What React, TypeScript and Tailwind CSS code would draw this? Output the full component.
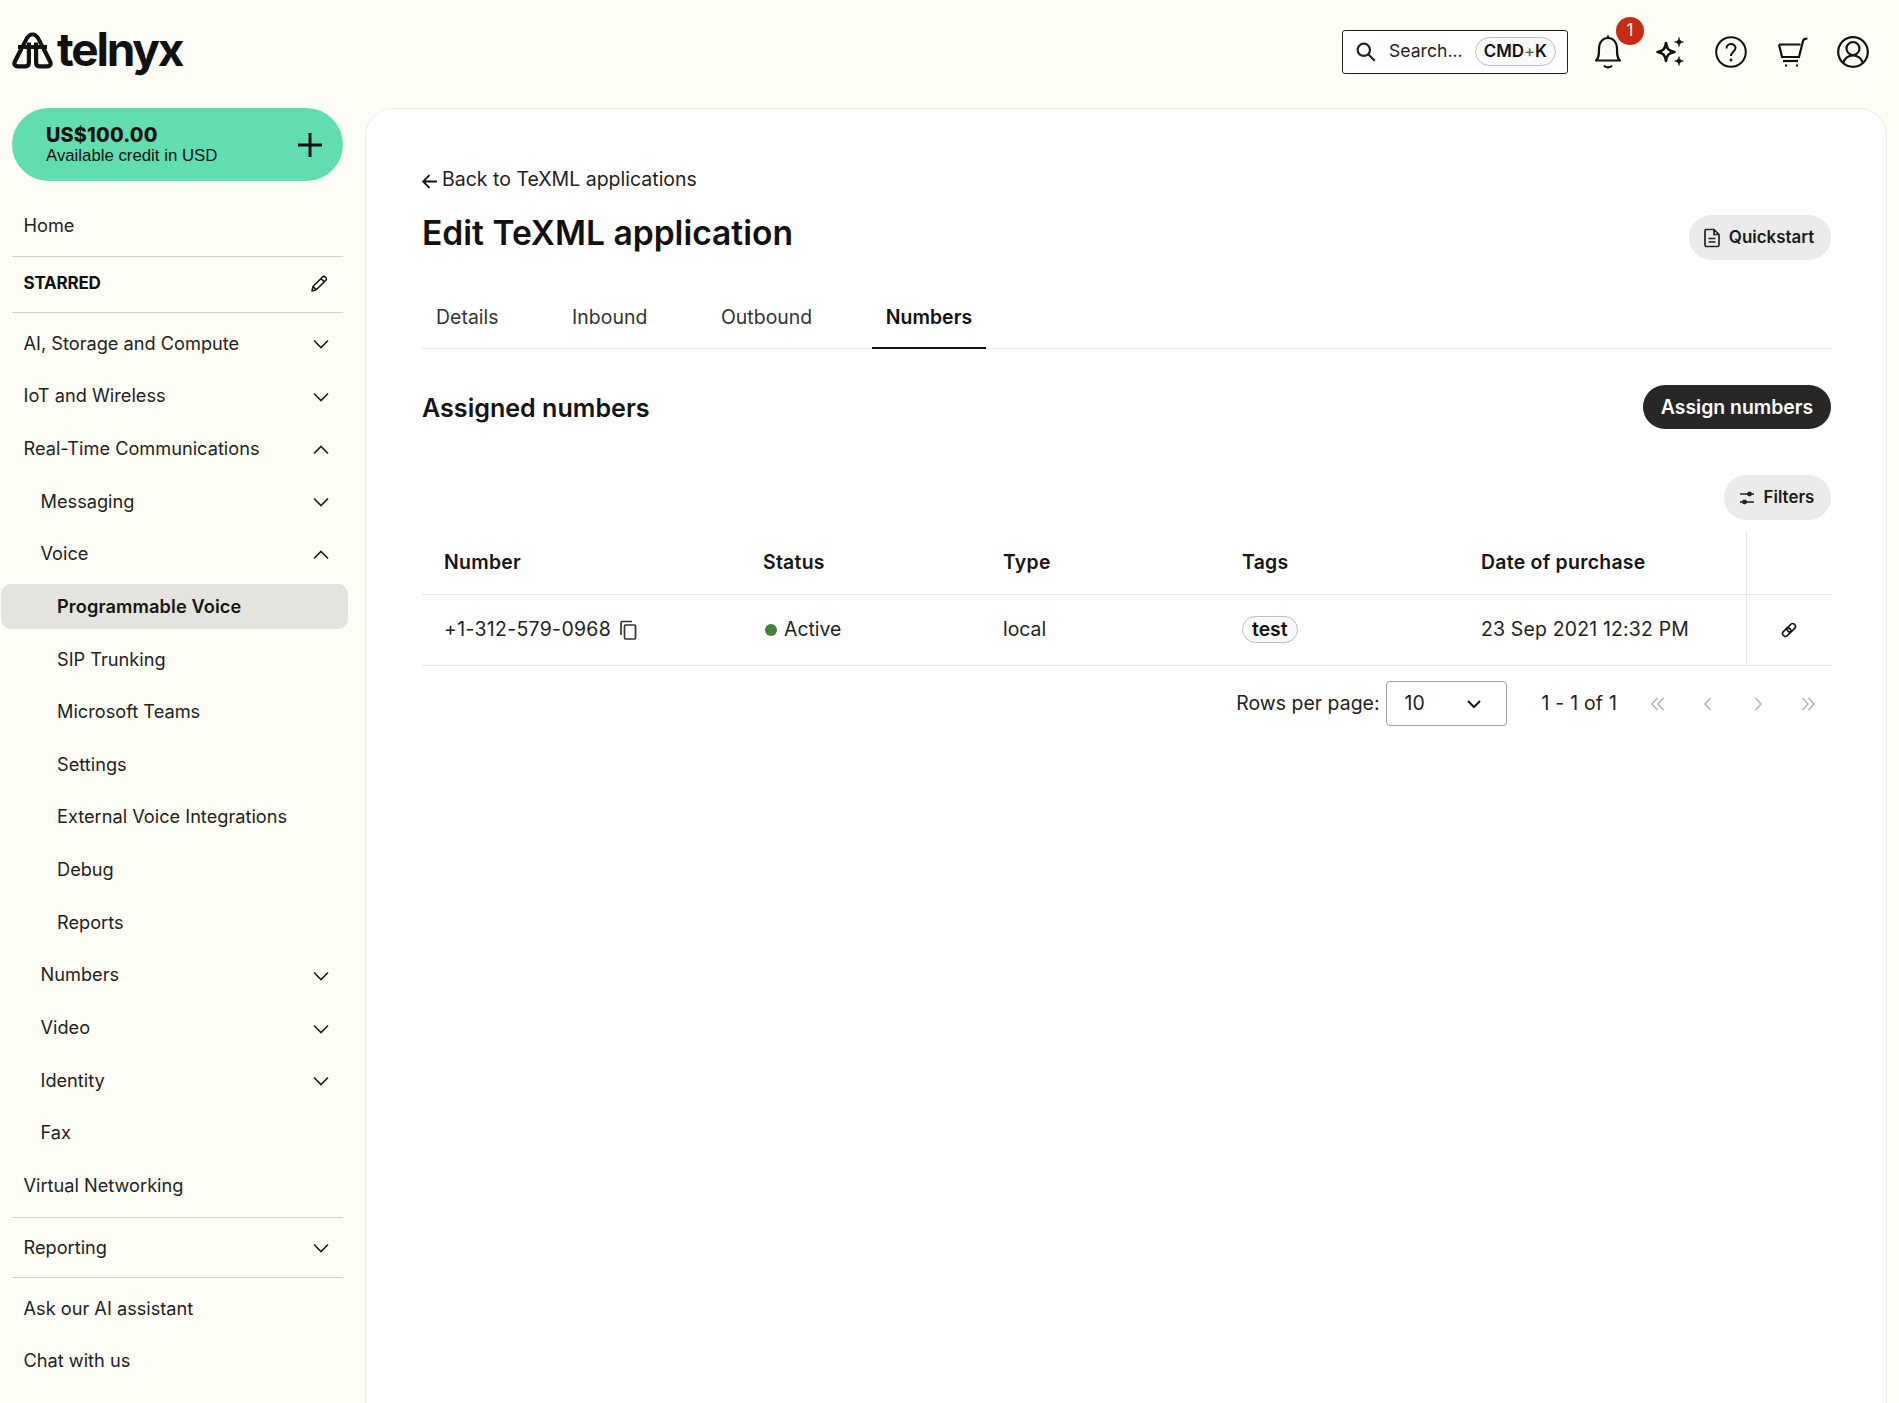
import React from "react";

function Chevron({ up = false }: { up?: boolean }) {
  return (
    <svg width="18" height="12" viewBox="0 0 18 12" fill="none" stroke="#1c1c1c" strokeWidth="1.6" className="shrink-0 mt-[2px]">
      {up ? <path d="M2 9.5 L9 2.5 L16 9.5" /> : <path d="M2 2.5 L9 9.5 L16 2.5" />}
    </svg>
  );
}

function NavRow({ label, level = 0, chevron, active = false }: { label: string; level?: 0 | 1 | 2; chevron?: "up" | "down"; active?: boolean }) {
  const indent = level === 0 ? "pl-[11.5px]" : level === 1 ? "pl-[28.5px]" : "pl-[45px]";
  if (active) {
    return (
      <div className="h-[52.65px] flex items-center -ml-[11px]">
        <div className="w-[347px] h-[45px] shrink-0 rounded-[10px] bg-[#e4e3de] flex items-center pl-[56px] font-semibold text-[18.2px] tracking-[0.1px] text-[#151515]">{label}</div>
      </div>
    );
  }
  return (
    <div className={`h-[52.65px] flex items-center justify-between pr-[13px] text-[18.2px] text-[#222222] ${indent}`}>
      <span>{label}</span>
      {chevron ? <Chevron up={chevron === "up"} /> : null}
    </div>
  );
}

function Logo() {
  return (
    <div className="flex items-center gap-[4px] -mt-[5px]">
      <svg width="41" height="37" viewBox="0 0 41 36" fill="none" stroke="#111111" className="shrink-0 -mt-[2px]">
        <path d="M10 15 L15 5.5 C16.6 2.6 18.6 1.8 20.5 1.8 C22.4 1.8 24.4 2.6 26 5.5 L31 15" strokeWidth="3.8" />
        <path d="M6 14.5 H35" strokeWidth="4" />
        <path d="M9.5 16 L2.9 29 C1.5 32 3 33.8 6 33.8 H13.5 C15.6 33.8 16.9 32.6 16.9 30 V10" strokeWidth="4.2" />
        <path d="M31.5 16 L38.1 29 C39.5 32 38 33.8 35 33.8 H27.5 C25.4 33.8 24.1 32.6 24.1 30 V10" strokeWidth="4.2" />
      </svg>
      <span className="text-[46px] leading-none font-bold tracking-[-2.2px] text-[#111111] -mt-[5px]">telnyx</span>
    </div>
  );
}

function IconButtons() {
  return (
    <div className="flex items-center">
      <div className="relative w-[30px] h-[36px] ml-[25px]">
        <svg width="30" height="36" viewBox="0 0 30 36" fill="none" stroke="#111111" strokeWidth="2.2">
          <path d="M15 1.5 V4" />
          <path d="M3 26.5 C6 24 6 20 6 15 C6 8 10 4 15 4 C20 4 24 8 24 15 C24 20 24 24 27 26.5 Z" strokeLinejoin="round" />
          <path d="M11 31.5 C12.5 34 17.5 34 19 31.5" />
        </svg>
        <span className="absolute -top-[17px] left-[23px] w-[28px] h-[28px] rounded-full bg-[#c62c15] text-white text-[17px] flex items-center justify-center">1</span>
      </div>
      <svg width="32" height="32" viewBox="0 0 32 32" className="ml-[30px]">
        <path d="M13 7 C14 13 15.5 15 21.5 16 C15.5 17 14 19 13 25 C12 19 10.5 17 4.5 16 C10.5 15 12 13 13 7 Z" fill="none" stroke="#111111" strokeWidth="2.6" strokeLinejoin="round" />
        <path d="M26 1.5 C26.6 4.5 27.5 5.4 30.5 6 C27.5 6.6 26.6 7.5 26 10.5 C25.4 7.5 24.5 6.6 21.5 6 C24.5 5.4 25.4 4.5 26 1.5 Z" fill="#111111" stroke="#111111" strokeWidth="0.6" />
        <path d="M26 20.5 C26.6 23.5 27.5 24.4 30.5 25 C27.5 25.6 26.6 26.5 26 29.5 C25.4 26.5 24.5 25.6 21.5 25 C24.5 24.4 25.4 23.5 26 20.5 Z" fill="#111111" stroke="#111111" strokeWidth="0.6" />
      </svg>
      <svg width="32" height="34" viewBox="0 0 32 34" fill="none" stroke="#111111" strokeWidth="2" className="ml-[30px]">
        <circle cx="16" cy="17" r="14.8" />
        <path d="M11.5 13.5 C11.5 7.5 20.5 7.5 20.5 13 C20.5 16.5 16 17 16 21" />
        <circle cx="16" cy="25" r="1.4" fill="#111111" stroke="none" />
      </svg>
      <svg width="32" height="30" viewBox="0 0 32 30" fill="none" stroke="#111111" strokeWidth="2.2" className="ml-[30px]">
        <path d="M2 7.5 H23.5 M2 7.5 L5 20 H22 L26 4 C26.5 2 27.5 1.5 30.5 1.5" />
        <path d="M6 24 H21" />
        <path d="M8 28.5 H10 M19 28.5 H21" />
      </svg>
      <svg width="32" height="34" viewBox="0 0 32 34" fill="none" stroke="#111111" strokeWidth="2.2" className="ml-[28px]">
        <circle cx="16" cy="17" r="14.8" />
        <circle cx="16" cy="13.5" r="6.5" />
        <path d="M6 28 C8 22.5 12 20.5 16 20.5 C20 20.5 24 22.5 26 28" />
      </svg>
    </div>
  );
}

function Header() {
  return (
    <header className="h-[108px] flex items-center justify-between pl-3 pr-[30px]">
      <Logo />
      <div className="flex items-center -mt-[5px]">
        <div className="w-[226px] h-[44px] border border-[#222222] rounded-[3px] bg-white flex items-center pl-[12px] pr-[11px] text-[17.6px] text-[#222222]">
          <svg width="22" height="22" viewBox="0 0 20 20" fill="none" stroke="#222222" strokeWidth="2" className="shrink-0">
            <circle cx="8" cy="8" r="5.6" />
            <path d="M12 12 L18 18" />
          </svg>
          <span className="ml-[12px]">Search...</span>
          <span className="ml-auto rounded-full border border-[#bdbdbd] bg-[#fafafa] h-[29px] px-[8px] flex items-center text-[16.9px] font-semibold text-[#111111]">CMD<span className="font-normal text-[#555555]">+</span>K</span>
        </div>
        <IconButtons />
      </div>
    </header>
  );
}

function Sidebar() {
  return (
    <aside className="w-[353px] ml-3 shrink-0">
      <div className="w-[331px]">
        <div className="h-[73px] rounded-full bg-[#60deb0] flex items-center justify-between pl-[34px] pr-[20px] text-[#111111]">
          <div className="flex flex-col">
            <span className="text-[19.8px] leading-[22px] font-extrabold tracking-[0.2px]">US$100.00</span>
            <span className="text-[16.8px] leading-[19px] [font-family:'Liberation_Sans',sans-serif]">Available credit in USD</span>
          </div>
          <svg width="26" height="26" viewBox="0 0 26 26" stroke="#111111" strokeWidth="3">
            <path d="M13 1 V25 M1 13 H25" />
          </svg>
        </div>
        <div className="mt-[18px] border-b border-[#d2d2d2] pb-[4px]">
          <NavRow label="Home" />
        </div>
        <div className="h-[56px] border-b border-[#d2d2d2] flex items-center justify-between pl-[11.5px] pr-[15px] mb-[4.4px]">
          <span className="text-[17px] font-bold text-[#111111] tracking-[-0.2px]">STARRED</span>
          <svg width="18" height="18" viewBox="0 0 18 18" fill="none" stroke="#111111" strokeWidth="1.5">
            <path d="M2 16 L3 11.5 L12.5 2 C13.3 1.2 14.5 1.2 15.5 2.2 C16.6 3.3 16.6 4.4 15.8 5.3 L6.3 14.8 Z M11 3.6 L14.2 6.8 M3 11.5 L6.3 14.8" strokeLinejoin="round" />
          </svg>
        </div>
        <NavRow label="AI, Storage and Compute" chevron="down" />
        <NavRow label="IoT and Wireless" chevron="down" />
        <NavRow label="Real-Time Communications" chevron="up" />
        <NavRow label="Messaging" level={1} chevron="down" />
        <NavRow label="Voice" level={1} chevron="up" />
        <NavRow label="Programmable Voice" level={2} active />
        <NavRow label="SIP Trunking" level={2} />
        <NavRow label="Microsoft Teams" level={2} />
        <NavRow label="Settings" level={2} />
        <NavRow label="External Voice Integrations" level={2} />
        <NavRow label="Debug" level={2} />
        <NavRow label="Reports" level={2} />
        <NavRow label="Numbers" level={1} chevron="down" />
        <NavRow label="Video" level={1} chevron="down" />
        <NavRow label="Identity" level={1} chevron="down" />
        <NavRow label="Fax" level={1} />
        <NavRow label="Virtual Networking" />
        <div className="mt-[5px] border-y border-[#d2d2d2] h-[61px] flex flex-col justify-center">
          <NavRow label="Reporting" chevron="down" />
        </div>
        <div className="mt-[4px]">
          <NavRow label="Ask our AI assistant" />
          <NavRow label="Chat with us" />
        </div>
      </div>
    </aside>
  );
}

function PillButton({ icon, label, className }: { icon: React.ReactNode; label: string; className: string }) {
  return (
    <div className={`rounded-full bg-[#ebebeb] flex items-center justify-center gap-[8px] pr-[3px] font-semibold text-[#1a1a1a] text-[16.9px] ${className}`}>
      {icon}
      <span>{label}</span>
    </div>
  );
}

function Tab({ label, active = false }: { label: string; active?: boolean }) {
  return (
    <div className={`h-[66px] px-[14px] flex items-center text-[19.4px] tracking-[0.05px] ${active ? "pt-[5px] font-semibold text-[#111111] border-b-2 border-[#111111]" : "pt-[3px] text-[#333333]"}`}>
      {label}
    </div>
  );
}

function PagerIcon({ d }: { d: string }) {
  return (
    <svg width="20" height="20" viewBox="0 0 20 20" fill="none" stroke="#b5b5b5" strokeWidth="1.6" className="shrink-0">
      <path d={d} />
    </svg>
  );
}

function Content() {
  const gridCols = "grid grid-cols-[319px_240px_239px_239px_287px_85px]";
  return (
    <main className="flex-1 mr-3 bg-white border border-[#ececec] rounded-t-[28px] border-b-0 pl-[56px] pr-[55px] min-h-0">
      <div className="mt-[58px] flex items-center h-[26px] text-[19.5px] text-[#222222]">
        <svg width="17" height="17" viewBox="0 0 16 16" fill="none" stroke="#111111" strokeWidth="1.7" className="shrink-0 mt-[2px] mr-[4px] -ml-[1px]">
          <path d="M15 8 H2 M8 2 L2 8 L8 14" />
        </svg>
        <span>Back to TeXML applications</span>
      </div>
      <div className="flex items-start justify-between mt-[15px] h-[75px]">
        <h1 className="text-[33.6px] leading-[50px] font-semibold text-[#111111]">Edit TeXML application</h1>
        <PillButton
          label="Quickstart"
          className="w-[142px] h-[45px] mt-[7px]"
          icon={
            <svg width="18" height="20" viewBox="0 0 18 20" fill="none" stroke="#222222" strokeWidth="1.7">
              <path d="M3 1.5 H11 L16 6.5 V17 C16 18 15.3 18.5 14.5 18.5 H3.5 C2.7 18.5 2 18 2 17 V3 C2 2 2.5 1.5 3 1.5 Z M5.5 10.5 H12.5 M5.5 14 H12.5 M11 1.5 V6.5 H16" />
            </svg>
          }
        />
      </div>
      <div className="flex gap-[45.5px] border-b border-[#e8e8e8] h-[66px]">
        <Tab label="Details" />
        <Tab label="Inbound" />
        <Tab label="Outbound" />
        <Tab label="Numbers" active />
      </div>
      <div className="flex items-center justify-between mt-[36px]">
        <h2 className="text-[25.1px] font-semibold text-[#141414] pt-[3px]">Assigned numbers</h2>
        <div className="w-[188px] h-[44px] pt-[1px] rounded-full bg-[#272727] text-white text-[19.4px] font-semibold flex items-center justify-center">Assign numbers</div>
      </div>
      <div className="flex justify-end mt-[46px]">
        <PillButton
          label="Filters"
          className="w-[107px] h-[45px]"
          icon={
            <svg width="18" height="18" viewBox="0 0 18 18" fill="#222222" stroke="#222222" strokeWidth="1.7">
              <path d="M2 5 H16 M2 13 H16" />
              <circle cx="11.5" cy="5" r="1.6" />
              <circle cx="6.5" cy="13" r="1.6" />
            </svg>
          }
        />
      </div>
      <div className={`${gridCols} mt-[11px] h-[64px] items-center border-b border-[#e8e8e8] text-[19.4px] tracking-[0.28px] font-semibold text-[#151515]`}>
        <div className="pl-[22px] pt-[1px]">Number</div>
        <div className="pl-[22px] pt-[1px]">Status</div>
        <div className="pl-[22px] pt-[1px]">Type</div>
        <div className="pl-[22px] pt-[1px]">Tags</div>
        <div className="pl-[22px] pt-[1px]">Date of purchase</div>
        <div className="h-full border-l border-[#e8e8e8]" />
      </div>
      <div className={`${gridCols} h-[71px] items-center border-b border-[#e8e8e8] text-[19.4px] tracking-[0.2px] text-[#222222]`}>
        <div className="pl-[22px] flex items-center gap-[8px]">
          <span className="tracking-[0.35px]">+1-312-579-0968</span>
          <svg width="18" height="20" viewBox="0 0 18 20" fill="none" stroke="#333333" strokeWidth="1.7" className="shrink-0">
            <rect x="5.5" y="5" width="11" height="14" rx="1.2" />
            <path d="M2 15 V3 C2 2 2.5 1.5 3.5 1.5 H13" />
          </svg>
        </div>
        <div className="pl-[24px] flex items-center gap-[7px]">
          <span className="w-[12px] h-[12px] rounded-full bg-[#45803c]" />
          <span className="tracking-normal">Active</span>
        </div>
        <div className="pl-[22px] tracking-normal">local</div>
        <div className="pl-[22px]">
          <span className="inline-flex items-center h-[27px] px-[9px] rounded-full border border-[#bdbdbd] bg-[#fafafa] text-[19.4px] tracking-normal font-semibold text-[#111111]">test</span>
        </div>
        <div className="pl-[22px]">23 Sep 2021 12:32 PM</div>
        <div className="h-full border-l border-[#e8e8e8] flex items-center justify-center">
          <svg width="16" height="16" viewBox="0 0 16 16" fill="none" stroke="#111111" strokeWidth="1.6">
            <rect x="5.6" y="3" width="9.4" height="5.6" rx="2.8" transform="rotate(-45 10.3 5.8)" />
            <rect x="1" y="7.4" width="9.4" height="5.6" rx="2.8" transform="rotate(-45 5.7 10.2)" />
          </svg>
        </div>
      </div>
      <div className="flex items-center justify-end mt-[14.5px] h-[46px] text-[19.4px] text-[#222222]">
        <span className="tracking-[0.05px]">Rows per page:</span>
        <div className="ml-[6px] w-[121px] h-[45px] border border-[#a0a0a0] rounded-[4px] flex items-center justify-between pl-[18px] pr-[24px]">
          <span>10</span>
          <svg width="16" height="12" viewBox="0 0 16 12" fill="none" stroke="#111111" strokeWidth="2">
            <path d="M2 3 L8 9 L14 3" />
          </svg>
        </div>
        <span className="ml-[35px] tracking-[0.22px]">1 - 1 of 1</span>
        <div className="ml-[31px] mr-[13px] flex items-center gap-[30px]">
          <PagerIcon d="M9.5 4 L4 10 L9.5 16 M15.5 4 L10 10 L15.5 16" />
          <PagerIcon d="M12.5 4 L7 10 L12.5 16" />
          <PagerIcon d="M7.5 4 L13 10 L7.5 16" />
          <PagerIcon d="M4.5 4 L10 10 L4.5 16 M10.5 4 L16 10 L10.5 16" />
        </div>
      </div>
    </main>
  );
}

export default function App() {
  return (
    <div className="w-[1899px] h-[1403px] overflow-hidden bg-[#fefef7] [font-family:Inter,sans-serif] flex flex-col">
      <Header />
      <div className="flex flex-1 min-h-0">
        <Sidebar />
        <Content />
      </div>
    </div>
  );
}
